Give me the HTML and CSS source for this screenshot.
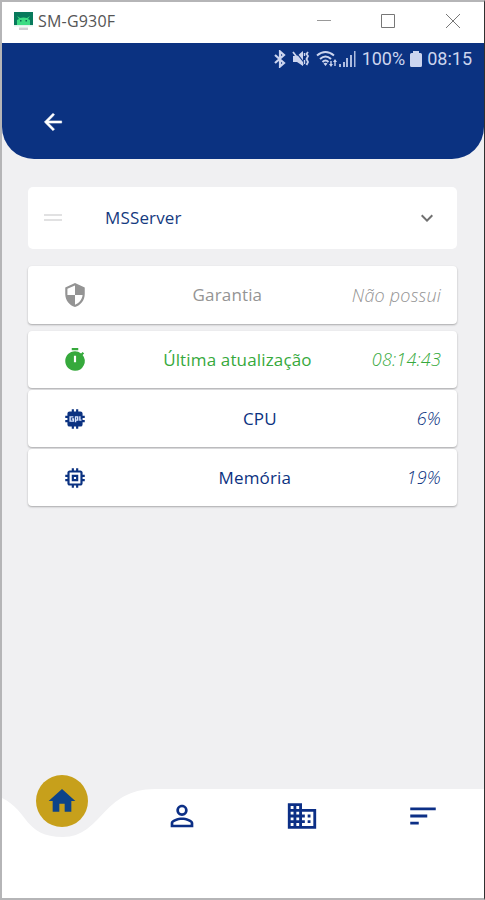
FILE: index.html
```html
<!DOCTYPE html>
<html lang="pt-BR">
<head>
<meta charset="utf-8">
<title>SM-G930F</title>
<link rel="stylesheet" href="styles.css">
</head>
<body>
<div class="window">
  <div class="titlebar">
    <svg class="app-icon" width="19" height="19" viewBox="0 0 19 19"><path fill="#087a5c" d="M0 0h19v14H0z"/><path fill="#3ddc84" d="M3 13V8l2-1-2-3 3 2q3.500-1 7 0l3-2-2 3 2 1v5z"/><path fill="#0b6b50" d="M6 8h1.500v1.500H6zM11.500 8H13v1.500h-1.500z"/><path fill="#dff3ea" d="M0 13h19v1.500H0z"/><path fill="#cfcfd3" d="M5 15.500h9V18H5z"/></svg>
    <span class="title">SM-G930F</span>
    <svg class="controls" width="146" height="18" viewBox="0 0 146 18" fill="none" stroke="#777" stroke-width="1"><path d="M2 8.500h14" stroke="#999"/><path d="M66.500 2.500h13v13h-13z"/><path d="M131 2l14 14M145 2l-14 14"/></svg>
  </div>
  <header class="header">
    <div class="status">
      <svg width="12" height="18" viewBox="0 0 12 18" fill="none" stroke="#ccd5ef" stroke-width="2.200"><path d="M1 5l9 8-4 3.500v-15L10 5l-9 8"/></svg>
      <svg class="mute" width="18" height="18" viewBox="0 0 18 18"><path fill="#ccd5ef" d="M1 6h4l6-5v15l-6-4H1z"/><path stroke="#0b3281" stroke-width="1.200" d="M3 1l9 11.500"/><path fill="none" stroke="#ccd5ef" stroke-width="1.800" d="M1 2l10 13M16 2l-1.500 2 1.500 2-1.500 3 1.500 3-1.500 3"/><path stroke="#ccd5ef" stroke-width="1.400" d="M12.500 3v3M12.500 10v4"/></svg>
      <svg class="wifi" width="22" height="18" viewBox="0 0 22 18"><path fill="none" stroke="#ccd5ef" stroke-width="2" d="M1 5.500q8.500-7 17 0M4 9q5.500-5 11 0M6.500 12q3-3 6 0"/><path fill="#ccd5ef" d="M7.500 13.500q2-1.500 4 0l-2 2.500zM13 14l2 3 2-3zM17 12l2-3 2 3zM14.300 11h1.400v3h-1.400zM18.300 12h1.400v4h-1.400z"/></svg>
      <svg class="signal" width="17" height="18" viewBox="0 0 17 18"><path fill="#aebcdf" d="M0 14h2v3H0zM4 12h2v5H4zM7 8h2v9H7zM11 5h2v12h-2zM15 1h1.500v16H15z"/></svg>
      <span class="battery-text">100%</span>
      <svg class="battery" width="12" height="18" viewBox="0 0 12 18"><path fill="#ccd5ef" d="M3 1h6v2h1.500q1.500 0 1.500 1.500v11q0 1.500-1.500 1.500h-9Q0 17 0 15.500v-11Q0 3 1.500 3H3z"/></svg>
      <span class="clock">08:15</span>
    </div>
    <svg class="back" width="26" height="26" viewBox="0 0 24 24"><path fill="#fff" stroke="#fff" stroke-width=".5" d="M20 11H7.830l5.590-5.590L12 4l-8 8 8 8 1.410-1.410L7.830 13H20z"/></svg>
  </header>
  <main class="content">
    <section class="server">
      <svg width="18" height="8" viewBox="0 0 18 8"><path fill="#e1e1e2" d="M0 0h18v2H0zM0 5h18v2H0z"/></svg>
      <span class="server-name">MSServer</span>
      <svg width="24" height="24" viewBox="0 0 24 24"><path fill="#707070" d="M7.410 8.590L12 13.170l4.590-4.580L18 10l-6 6-6-6z"/></svg>
    </section>
    <section class="rows">
      <div class="row muted first">
        <span class="icon"><svg width="26" height="26" viewBox="0 0 24 24"><path fill="currentColor" d="M12 1L3 5v6c0 5.550 3.840 10.740 9 12 5.160-1.260 9-6.450 9-12V5l-9-4zm0 10.990h7c-.53 4.120-3.280 7.790-7 8.940V12H5V6.300l7-3.110v8.800z"/></svg></span>
        <span class="label">Garantia</span><span class="value">Não possui</span>
      </div>
      <div class="row green">
        <span class="icon"><svg width="26" height="26" viewBox="0 0 24 24"><path fill="currentColor" d="M15 1H9v2h6V1zm4.030 6.390l1.420-1.420c-.43-.51-.9-.99-1.410-1.410l-1.420 1.420A8.960 8.960 0 0 0 12 4c-4.970 0-9 4.030-9 9s4.020 9 9 9a8.994 8.994 0 0 0 7.030-14.610zM13 14h-2V8h2v6z"/></svg></span>
        <span class="label">Última atualização</span><span class="value">08:14:43</span>
      </div>
      <div class="row blue">
        <span class="icon"><svg width="26" height="26" viewBox="0 0 24 24"><path fill="currentColor" d="M9 3h2v2h2V3h2v2h2q2 0 2 2v2h2v2h-2v2h2v2h-2v2q0 2-2 2h-2v2h-2v-2h-2v2H9v-2H7q-2 0-2-2v-2H3v-2h2v-2H3V9h2V7q0-2 2-2h2z"/><path fill="none" stroke="#d9e4fa" stroke-width="1.300" d="M10.500 10H7.500v4h3v-2H9M12.500 15v-5h2v3h-2M16.500 9.500V13h1.500"/></svg></span>
        <span class="label">CPU</span><span class="value">6%</span>
      </div>
      <div class="row blue">
        <span class="icon"><svg width="26" height="26" viewBox="0 0 24 24"><path fill="currentColor" d="M15 9H9v6h6V9zm-2 4h-2v-2h2v2zm8-2V9h-2V7c0-1.100-.9-2-2-2h-2V3h-2v2h-2V3H9v2H7c-1.100 0-2 .9-2 2v2H3v2h2v2H3v2h2v2c0 1.100.9 2 2 2h2v2h2v-2h2v2h2v-2h2c1.100 0 2-.9 2-2v-2h2v-2h-2v-2h2zm-4 6H7V7h10v10z"/></svg></span>
        <span class="label">Memória</span><span class="value">19%</span>
      </div>
    </section>
  </main>
  <nav class="nav">
    <svg class="nav-bg" width="482" height="123" viewBox="0 0 482 123"><path fill="#fff" d="M0 23C27 36 22 62 61 62S100 14 153 14H482V123H0z"/></svg>
    <div class="tabs">
      <a class="tab active"><svg width="32" height="32" viewBox="0 0 24 24"><path fill="currentColor" d="M10 20v-6h4v6h5v-8h3L12 3 2 12h3v8z"/></svg></a>
      <a class="tab"><svg width="34" height="34" viewBox="0 0 24 24"><path fill="currentColor" d="M12 5.900a2.100 2.100 0 1 1 0 4.200 2.100 2.100 0 0 1 0-4.200m0 9c2.970 0 6.100 1.460 6.100 2.100v1.100H5.900V17c0-.64 3.130-2.100 6.100-2.100M12 4C9.790 4 8 5.790 8 8s1.790 4 4 4 4-1.790 4-4-1.790-4-4-4zm0 9c-2.670 0-8 1.340-8 4v3h16v-3c0-2.660-5.330-4-8-4z"/></svg></a>
      <a class="tab"><svg width="34" height="34" viewBox="0 0 24 24"><path fill="currentColor" d="M12 7V3H2v18h20V7H12zM6 19H4v-2h2v2zm0-4H4v-2h2v2zm0-4H4V9h2v2zm0-4H4V5h2v2zm4 12H8v-2h2v2zm0-4H8v-2h2v2zm0-4H8V9h2v2zm0-4H8V5h2v2zm10 12h-8v-2h2v-2h-2v-2h2v-2h-2V9h8v10zm-2-8h-2v2h2v-2zm0 4h-2v2h2v-2z"/></svg></a>
      <a class="tab"><svg width="34" height="34" viewBox="0 0 24 24"><path fill="currentColor" d="M3 18h6v-2H3v2zM3 6v2h18V6H3zm0 7h12v-2H3v2z"/></svg></a>
    </div>
  </nav>
</div>
</body>
</html>
```
FILE: styles.css
```css
* { box-sizing: border-box; }
body { margin: 0; font-family: "Open Sans", "Noto Sans", sans-serif; }
svg { display: block; flex: none; }
.window {
  width: 485px;
  height: 900px;
  display: flex;
  flex-direction: column;
  background: #f0f0f2;
  border: 2px solid #b5b5b7;
  border-right: 1px solid #303030;
}
.titlebar {
  height: 41px;
  display: flex;
  align-items: center;
  background: #fff;
  padding: 0 23px 3px 12px;
}
.app-icon { margin-right: 5px; }
.title { font-size: 16px; letter-spacing: 0.2px; color: #555; }
.controls { margin-left: auto; }
.header {
  height: 116px;
  background: #0b3281;
  border-radius: 0 0 32px 32px;
}
.status {
  height: 33px;
  display: flex;
  align-items: center;
  justify-content: flex-end;
  padding: 0 12px 2px 0;
  color: #ccd5ef;
  font: 18px Roboto, sans-serif;
}
.mute { margin-left: 6px; }
.wifi { margin-left: 6px; }
.signal { margin-left: 1px; }
.battery-text { margin: 0 5px 0 6px; }
.clock { margin-left: 5px; }
.back { margin: 33px 0 0 38px; }
.content { flex: 1; padding: 28px 27px 0 26px; }
.server {
  height: 62px;
  display: flex;
  align-items: center;
  background: #fff;
  border-radius: 5px;
  padding: 0 18px 0 16px;
}
.server-name {
  flex: 1;
  margin-left: 43px;
  padding-bottom: 2px;
  font-size: 17px;
  font-weight: 500;
  letter-spacing: 0.15px;
  color: #153a80;
}
.rows { margin-top: 17px; display: flex; flex-direction: column; gap: 2px; }
.row {
  height: 57px;
  display: flex;
  align-items: center;
  background: #fff;
  border-radius: 4px;
  box-shadow: 0 1px 2px rgba(0, 0, 0, 0.3);
  padding: 0 16px 0 18px;
  font-size: 17px;
}
.first { height: 58px; margin-bottom: 5px; }
.icon { width: 57px; display: flex; justify-content: center; }
.label { flex: 1; padding-bottom: 1px; text-align: center; font-weight: 500; letter-spacing: 0.15px; }
.value { padding-bottom: 1px; font-size: 18px; font-style: italic; font-weight: 300; letter-spacing: 0.2px; }
.muted { color: #949494; }
.green { color: #36a93c; }
.blue { color: #0b3281; }
.nav { height: 123px; display: grid; }
.nav-bg, .tabs { grid-area: 1 / 1; }
.tabs { display: grid; grid-template-columns: 119px 121px 120px 121px; justify-items: center; align-items: start; z-index: 1; }
.tab { color: #0c2f86; margin-top: 24px; display: flex; }
.active {
  width: 52px;
  height: 52px;
  margin-top: 0;
  align-items: center;
  justify-content: center;
  border-radius: 50%;
  background: #c7a01b;
  color: #0d4389;
}
```
